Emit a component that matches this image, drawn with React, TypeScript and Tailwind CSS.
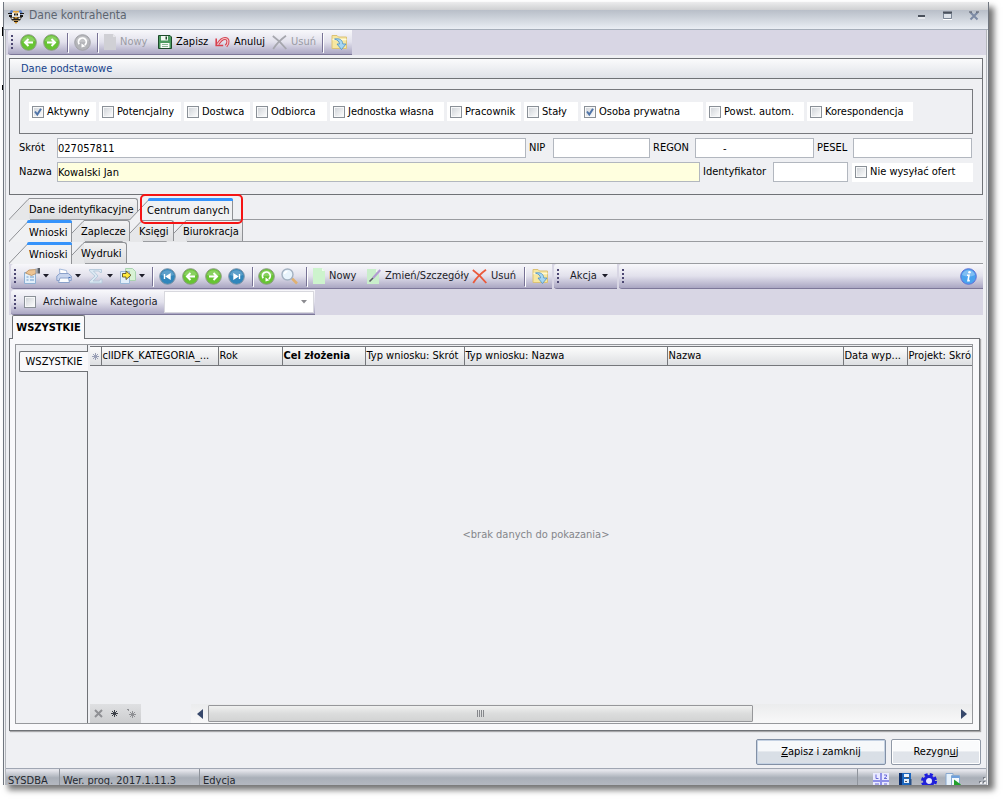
import { useId, useState } from "react";
import type { ReactNode } from "react";

const FLAGS = [
  { label: "Aktywny", width: "w-[67px]", checked: true },
  { label: "Potencjalny", width: "w-[82px]", checked: false },
  { label: "Dostwca", width: "w-[66px]", checked: false },
  { label: "Odbiorca", width: "w-[74px]", checked: false },
  { label: "Jednostka własna", width: "w-[114px]", checked: false },
  { label: "Pracownik", width: "w-[74px]", checked: false },
  { label: "Stały", width: "w-[54px]", checked: false },
  { label: "Osoba prywatna", width: "w-[122px]", checked: true },
  { label: "Powst. autom.", width: "w-[98px]", checked: false },
  { label: "Korespondencja", width: "w-[106px]", checked: false },
];

const COLUMNS = [
  { label: "clIDFK_KATEGORIA_...", width: "w-[117px]" },
  { label: "Rok", width: "w-[64px]" },
  { label: "Cel złożenia", width: "w-[83px]", bold: true },
  { label: "Typ wniosku: Skrót", width: "w-[99px]" },
  { label: "Typ wniosku: Nazwa", width: "w-[203px]" },
  { label: "Nazwa", width: "" },
  { label: "Data wyp...", width: "w-[64px]" },
  { label: "Projekt: Skró", width: "w-[65px]" },
];

interface TabItem {
  label: string;
  width: string;
}

const MAIN_TABS: TabItem[] = [
  { label: "Dane identyfikacyjne", width: "w-[129px]" },
  { label: "Centrum danych", width: "w-[103px]" },
];

const CENTER_TABS: TabItem[] = [
  { label: "Wnioski", width: "w-[63px]" },
  { label: "Zaplecze", width: "w-[66px]" },
  { label: "Księgi", width: "w-[52px]" },
  { label: "Biurokracja", width: "w-[77px]" },
];

const REQUEST_TABS: TabItem[] = [
  { label: "Wnioski", width: "w-[63px]" },
  { label: "Wydruki", width: "w-[63px]" },
];

/* ---------- icons ---------- */

type ArrowKind = "left" | "right" | "first" | "last" | "refresh";

const ARROWS: Record<ArrowKind, ReactNode> = {
  left: <path d="M13 8.5H5M8.5 5L5 8.5L8.5 12" />,
  right: <path d="M4 8.5h8M8.5 5L12 8.5L8.5 12" />,
  first: <path d="M5.5 6v5M11 6.2v4.6L7.5 8.5z" fill="#fff" strokeWidth="1.4" />,
  last: <path d="M11.5 6v5M6 6.2v4.6l3.500-2.300z" fill="#fff" strokeWidth="1.4" />,
  refresh: (
    <>
      <path d="M5.200 10.200A3.900 3.900 0 1 1 10.800 11" strokeWidth="1.800" />
      <path d="M7.500 9.500v4l4-1.200z" fill="#fff" stroke="none" />
    </>
  ),
};

function RoundIcon({ kind, color, edge }: { kind: ArrowKind; color: string; edge: string }) {
  return (
    <svg width="17" height="17" viewBox="0 0 17 17" aria-hidden="true">
      <circle cx="8.5" cy="8.5" r="7.8" fill={color} stroke={edge} />
      <path d="M2 7a6.700 6.200 0 0 1 13 0q-6.500 2.500-13 0z" fill="#fff" opacity="0.22" />
      <g fill="none" stroke="#fff" strokeWidth="2">{ARROWS[kind]}</g>
    </svg>
  );
}

const Green = ({ kind }: { kind: ArrowKind }) => <RoundIcon kind={kind} color="#67c433" edge="#8a9a80" />;
const Blue = ({ kind }: { kind: ArrowKind }) => <RoundIcon kind={kind} color="#3186bb" edge="#7d93a6" />;

function PageIcon({ color, fold }: { color: string; fold: string }) {
  return (
    <svg width="12" height="16" viewBox="0 0 12 16" className="shrink-0" aria-hidden="true">
      <path d="M0 0h9l3 3v13H0z" fill={color} />
      <path d="M9 0v3h3z" fill={fold} />
    </svg>
  );
}

function FloppyIcon() {
  return (
    <svg width="14" height="14" viewBox="0 0 14 14" aria-hidden="true">
      <path d="M.5.5h11.500l1.500 1.500v11.500H.5z" fill="#4c9a5f" stroke="#1d4a2b" />
      <path d="M3 1h7v4.500H3z" fill="#f2f6f2" />
      <path d="M7.500 1.500h1.500v3H7.500z" fill="#1d4a2b" />
      <path d="M2.500 8h9v5h-9z" fill="#f7faf7" />
      <path d="M4 9.500h6M4 11.500h6" stroke="#8bb896" />
    </svg>
  );
}

function UndoIcon() {
  return (
    <svg width="15" height="14" viewBox="0 0 15 14" fill="none" aria-hidden="true">
      <path d="M3 9C5.500 5 7.500 3.500 10 3.500C13.500 3.500 14 8 11 11" stroke="#d24553" strokeWidth="3.200" />
      <path d="M3 9C5.500 5 7.500 3.500 10 3.500C13.500 3.500 14 8 11 11" stroke="#f9c4c8" strokeWidth="1.200" />
      <path d="M1.200 3.500v7h7" stroke="#d9404e" strokeWidth="1.600" />
    </svg>
  );
}

function CrossIcon({ color }: { color: string }) {
  return (
    <svg width="15" height="15" viewBox="0 0 15 15" fill="none" aria-hidden="true">
      <path d="M.8 1Q8 6 14.300 14M14 .8Q6 6.500 1.200 14" stroke={color} strokeWidth="1.800" />
    </svg>
  );
}

function FolderIcon() {
  return (
    <svg width="17" height="16" viewBox="0 0 17 16" aria-hidden="true">
      <path d="M1 1.500h5l1.500 1.500h8v11.500H1z" fill="#f6e7a0" stroke="#dcc275" />
      <path d="M1.500 5.500h14" stroke="#fff9d8" strokeWidth="1.500" />
      <path d="M3.500 5c5-1 8 .8 8.300 5h3.200l-4.500 5.500L6 10h2.500c-.2-2.500-1.700-4-5-5z" fill="#a5d6f3" stroke="#4a8fc4" strokeWidth=".8" />
    </svg>
  );
}

function HandPageIcon() {
  return (
    <svg width="16" height="16" viewBox="0 0 16 16" aria-hidden="true">
      <path d="M.5 4.500h11v11H.5z" fill="#e2effa" stroke="#8fb0d2" />
      <path d="M2.500 9h2M2.500 12h2M6 9h4M6 12h4" stroke="#6f9bcb" />
      <path d="M1.500 5l3.500-3 7-.5v4l-4.500 2L5 6.500z" fill="#edc493" stroke="#b58a5b" strokeWidth=".8" />
      <path d="M11.500.5h2v5h-2z" fill="#a4abb5" />
      <path d="M13.500 0H16v5.500h-2.500z" fill="#5b6068" />
    </svg>
  );
}

function PrinterIcon() {
  return (
    <svg width="16" height="16" viewBox="0 0 16 16" aria-hidden="true">
      <path d="M3.500 1l7 1.500 1 5H4z" fill="#fff" stroke="#a5b9dc" />
      <path d="M.8 8l3-2.500h8.500l3 2.500v4.500H.8z" fill="#c8d5ee" stroke="#8ba1ca" />
      <path d="M4 10h8.500l1 4.500H2.500z" fill="#fbfdff" stroke="#8ba1ca" />
      <path d="M12.500 9.500h2" stroke="#3f6db4" />
    </svg>
  );
}

function SigmaIcon() {
  return (
    <svg width="16" height="16" viewBox="0 0 16 16" aria-hidden="true">
      <path d="M1.500 1.500h12v3h-1.500l-1-1.500H5.500L10 8l-5 5h6.500l1-2H14v4H1.500v-1.500L7 8 1.500 3z" fill="#dbe8f2" stroke="#b3c8da" strokeWidth=".9" />
    </svg>
  );
}

function ExportIcon() {
  return (
    <svg width="16" height="16" viewBox="0 0 16 16" aria-hidden="true">
      <path d="M5.500.5h7l3 3v9h-10z" fill="#d8f2d4" stroke="#a9d2b0" />
      <path d="M.5 3.500h9v12h-9z" fill="#e1eefa" stroke="#9ab8d8" />
      <path d="M2.500 5.500h3.500V3l5 4.200-5 4.300V9H2.500z" fill="#ffe93b" stroke="#5d5426" strokeWidth=".9" />
    </svg>
  );
}

function SearchIcon() {
  return (
    <svg width="17" height="17" viewBox="0 0 17 17" fill="none" aria-hidden="true">
      <path d="M11 10.500l5 5" stroke="#e0b070" strokeWidth="2.500" />
      <circle cx="6.500" cy="6.500" r="5.500" fill="#e8f4fc" stroke="#a3b1c1" strokeWidth="1.400" />
      <path d="M3.500 6a3 3 0 0 1 3-2.500" stroke="#fff" strokeWidth="1.500" />
    </svg>
  );
}

function EditIcon() {
  return (
    <svg width="14" height="16" viewBox="0 0 14 16" className="shrink-0" aria-hidden="true">
      <path d="M0 1h9l3 3v12H0z" fill="#c9eecb" />
      <path d="M9 1v3h3z" fill="#eefaee" />
      <path d="M13.300 2L6 10" stroke="#b29bd2" strokeWidth="2.200" />
      <path d="M6 10L2.500 13.500" stroke="#5c5c66" strokeWidth="1.600" />
    </svg>
  );
}

function InfoIcon() {
  return (
    <svg width="17" height="17" viewBox="0 0 17 17" aria-hidden="true">
      <circle cx="8.5" cy="8.5" r="7.8" fill="#4aa3ee" stroke="#5f6fd6" />
      <path d="M2 7a6.700 6.200 0 0 1 13 0q-6.500 3-13 0z" fill="#fff" opacity=".3" />
      <circle cx="9.500" cy="4.300" r="1.300" fill="#fff" />
      <path d="M7 7.300h2L8 12.600h1.800" fill="none" stroke="#fff" strokeWidth="1.600" />
    </svg>
  );
}

function BeeIcon() {
  return (
    <svg width="16" height="14" viewBox="0 0 16 14" aria-hidden="true">
      <path d="M3 0l4 1.500-2 4-4-2zM13 0L9 1.500l2 4 4-2z" fill="#5a7fc4" />
      <path d="M0 3h4v1H0zM12 3h4v1h-4zM1 5h3v2H1zM12 5h3v2h-3z" fill="#1c1a18" />
      <path d="M5 1h6v4H5z" fill="#e2a33a" />
      <path d="M4 2.500h3.500v4H4zM8.500 2.500H12v4H8.500z" fill="#f7f3ea" />
      <path d="M6 3.500h1.500v2H6zM8.500 3.500H10v2H8.500z" fill="#111" />
      <path d="M2 7h12l-2 3.500H4z" fill="#24211d" />
      <path d="M3.500 7.500h2V9h-2zM10.500 7.500h2V9h-2z" fill="#f0ead9" />
      <path d="M6.500 7h3v1.500h-3zM5 10.500h6L8 14z" fill="#d6962a" />
      <path d="M6 11.500h4" stroke="#201a12" />
    </svg>
  );
}

const Caret = () => (
  <svg width="6" height="4" viewBox="0 0 6 4" aria-hidden="true">
    <path d="M0 0h6L3 3.500z" fill="currentColor" />
  </svg>
);

/* ---------- building blocks ---------- */

function CheckBox({ label, checked = false, className = "" }: { label: string; checked?: boolean; className?: string }) {
  const id = useId();
  const [on, setOn] = useState(checked);
  return (
    <div className={`flex items-center gap-[3px] whitespace-nowrap ${className}`}>
      <span className="relative flex">
        <input
          id={id}
          type="checkbox"
          checked={on}
          onChange={(e) => setOn(e.target.checked)}
          className="h-3 w-3 appearance-none border border-[#8a9097] bg-linear-to-br from-[#cdd1d6] to-white shadow-[inset_0_0_0_1px_#f7f8f9]"
        />
        {on && (
          <svg width="12" height="12" viewBox="0 0 12 12" fill="none" className="pointer-events-none absolute inset-0">
            <path d="M3 5.500l2.300 3L9 2.800" stroke="#4f74a8" strokeWidth="2" />
          </svg>
        )}
      </span>
      <label htmlFor={id}>{label}</label>
    </div>
  );
}

function Field({ label, labelClass, inputClass, value = "" }: { label: string; labelClass: string; inputClass: string; value?: string }) {
  const id = useId();
  return (
    <>
      <label htmlFor={id} className={`shrink-0 ${labelClass}`}>
        {label}
      </label>
      <input id={id} defaultValue={value} className={`h-5 min-w-0 border border-[#b2b7bf] outline-none ${inputClass}`} />
    </>
  );
}

function SlantTab({ tab, index, active, onClick }: { tab: TabItem; index: number; active: boolean; onClick: () => void }) {
  return (
    <button
      type="button"
      role="tab"
      aria-selected={active}
      onClick={onClick}
      style={{ zIndex: active ? 10 : 9 - index }}
      className={`relative pt-[3px] text-left whitespace-nowrap ${tab.width} ${active ? "h-[22px]" : "h-[21px]"} ${
        index > 0 ? "-ml-2 pl-[17px]" : "pl-5"
      }`}
    >
      <svg width="21" height="22" viewBox="0 0 21 22" className="absolute top-0 left-0" aria-hidden="true">
        <path d="M0 22L19 1.500Q20 .5 21 .5V22z" fill={active ? "#f0f1f3" : "#e6e7e9"} />
        <path d="M0 21.500L19 1.500Q20 .5 21 .5" fill="none" stroke="#8f9195" />
      </svg>
      <span
        className={`absolute inset-y-0 right-0 left-5 rounded-tr-[3px] border-r border-[#8f9195] ${
          active ? "bg-[#f0f1f3]" : "border-t bg-linear-to-b from-[#f2f2f3] to-[#dddee0]"
        }`}
      />
      {active && <span className="absolute top-0 right-0 left-[18px] h-[3px] rounded-t-[2px] bg-[#3593fb]" />}
      <span className="relative">{tab.label}</span>
    </button>
  );
}

function TabRow({ tabs, initial, name, className = "", children }: { tabs: TabItem[]; initial: number; name: string; className?: string; children?: ReactNode }) {
  const [current, setCurrent] = useState(initial);
  return (
    <div role="tablist" aria-label={name} className={`relative isolate mx-[3px] flex h-[22px] items-start border-b border-[#9a9ca0] ${className}`}>
      {tabs.map((tab, i) => (
        <SlantTab key={tab.label} tab={tab} index={i} active={i === current} onClick={() => setCurrent(i)} />
      ))}
      {children}
    </div>
  );
}

function Toolbar({ name, className = "", children }: { name: string; className?: string; children?: ReactNode }) {
  return (
    <div
      role="toolbar"
      aria-label={name}
      className={`flex h-[25px] items-center rounded-l-[3px] border-b border-[#7d7899] bg-linear-to-b from-[#f8f8fb] via-[#e2e1ec] to-[#aaa6c2] ${className}`}
    >
      <span className="flex w-[9px] shrink-0 flex-col items-start gap-[2px] pl-[3px]">
        {[0, 1, 2, 3].map((i) => (
          <span key={i} className="h-[2px] w-[2px] bg-[#4d4873]" />
        ))}
      </span>
      {children}
    </div>
  );
}

const Separator = () => (
  <span className="flex w-2 shrink-0 justify-center">
    <span className="h-[19px] w-px bg-[#777295] shadow-[1px_1px_0_#fff]" />
  </span>
);

function IconButton({ title, width, children }: { title: string; width: string; children: ReactNode }) {
  return (
    <button type="button" aria-label={title} className={`flex shrink-0 items-center justify-center ${width}`}>
      {children}
    </button>
  );
}

function MenuButton({ title, children }: { title: string; children: ReactNode }) {
  return (
    <button type="button" aria-label={title} className="flex w-8 shrink-0 items-center gap-[3px] pl-1">
      {children}
      <Caret />
    </button>
  );
}

function TextButton({ label, icon, width, muted = false }: { label: string; icon: ReactNode; width: string; muted?: boolean }) {
  return (
    <button type="button" className={`flex shrink-0 items-center gap-1 pl-[3px] whitespace-nowrap ${width} ${muted ? "text-[#9a9ba3]" : ""}`}>
      {icon}
      {label}
    </button>
  );
}

/* ---------- window sections ---------- */

function TitleBar() {
  return (
    <header className="border-b border-[#a5adb9]">
      <div className="h-2 bg-linear-to-b from-[#ececed] to-[#cfd0d2]" />
      <div className="flex h-[19px] items-start bg-linear-to-b from-[#b8bec8] to-[#eaeef4] pr-[9px] pl-1">
        <BeeIcon />
        <h1 className="-mt-[2px] flex-1 pl-[5px] text-[12px] text-[#5d6570]">Dane kontrahenta</h1>
        <div className="flex items-center gap-4">
          <button type="button" aria-label="Minimalizuj" className="p-px">
            <svg width="8" height="10" viewBox="0 0 8 10">
              <path d="M0 4h7v2H0z" fill="#4a515c" />
              <path d="M0 7h7" stroke="#fff" />
            </svg>
          </button>
          <button type="button" aria-label="Maksymalizuj">
            <svg width="10" height="10" viewBox="0 0 10 10" fill="none">
              <path d="M.5 2.500h8v5h-8z" fill="#dde2e9" stroke="#7a8594" />
              <path d="M0 1.500h9" stroke="#4a515c" strokeWidth="2" />
              <path d="M0 8.500h9" stroke="#fff" />
            </svg>
          </button>
          <button type="button" aria-label="Zamknij">
            <svg width="10" height="10" viewBox="0 0 10 10" fill="none">
              <path d="M1.500 1.500l7 7M8.500 1.500l-7 7" stroke="#7d8ba5" strokeWidth="2" />
              <path d="M0 1h3M7 1h3" stroke="#4a515c" />
            </svg>
          </button>
        </div>
      </div>
    </header>
  );
}

function BasicData() {
  return (
    <section className="mx-[3px] mt-[3px] border border-[#6f7276]">
      <h2 className="flex h-5 items-center border-b border-[#6f7276] bg-linear-to-b from-[#fbfbfc] to-[#dfe2e8] pl-[11px] text-[#15428b]">
        Dane podstawowe
      </h2>
      <div className="px-[9px] pt-[10px] pb-3">
        <div className="flex h-[45px] items-center gap-[3px] border border-[#77797d] pl-[9px]">
          {FLAGS.map((flag) => (
            <CheckBox
              key={flag.label}
              label={flag.label}
              checked={flag.checked}
              className={`h-[19px] shrink-0 bg-white pl-[3px] ${flag.width}`}
            />
          ))}
        </div>
        <div className="mt-1 flex items-center pr-px">
          <Field label="Skrót" labelClass="w-[38px]" inputClass="flex-1 bg-white" value="027057811" />
          <Field label="NIP" labelClass="w-[27px] pl-[3px]" inputClass="w-[97px] bg-white" />
          <Field label="REGON" labelClass="w-[45px] pl-[3px]" inputClass="w-[119px] bg-white pl-[27px]" value="-" />
          <Field label="PESEL" labelClass="w-[39px] pl-[3px]" inputClass="w-[119px] bg-white" />
        </div>
        <div className="mt-1 flex items-center">
          <Field label="Nazwa" labelClass="w-[38px]" inputClass="flex-1 bg-[#ffffdf]" value="Kowalski Jan" />
          <Field label="Identyfikator" labelClass="w-[73px] pl-[3px]" inputClass="w-[75px] bg-white" />
          <CheckBox label="Nie wysyłać ofert" className="ml-1 h-[19px] w-[121px] shrink-0 bg-white pl-[3px]" />
        </div>
      </div>
    </section>
  );
}

function RequestToolbars() {
  return (
    <div className="mx-[3px] bg-[#d8d6e4] pl-[2px] text-[#1c1c28]">
      <div className="flex h-[26px] gap-[2px]">
        <Toolbar name="Wnioski">
          <MenuButton title="Widok"><HandPageIcon /></MenuButton>
          <MenuButton title="Drukuj"><PrinterIcon /></MenuButton>
          <MenuButton title="Sumy"><SigmaIcon /></MenuButton>
          <MenuButton title="Eksport"><ExportIcon /></MenuButton>
          <Separator />
          <IconButton title="Pierwszy" width="w-[23px]"><Blue kind="first" /></IconButton>
          <IconButton title="Poprzedni" width="w-[23px]"><Green kind="left" /></IconButton>
          <IconButton title="Następny" width="w-[23px]"><Green kind="right" /></IconButton>
          <IconButton title="Ostatni" width="w-[23px]"><Blue kind="last" /></IconButton>
          <Separator />
          <IconButton title="Odśwież" width="w-5"><Green kind="refresh" /></IconButton>
          <IconButton title="Szukaj" width="w-[26px]"><SearchIcon /></IconButton>
          <Separator />
          <TextButton label="Nowy" width="w-[54px]" icon={<PageIcon color="#cdf3cd" fold="#f0fbf0" />} />
          <TextButton label="Zmień/Szczegóły" width="w-[105px]" icon={<EditIcon />} />
          <TextButton label="Usuń" width="w-[51px]" icon={<CrossIcon color="#ea5a3c" />} />
          <Separator />
          <IconButton title="Załączniki" width="w-6"><FolderIcon /></IconButton>
        </Toolbar>
        <Toolbar name="Akcja">
          <button type="button" className="flex w-[54px] items-center gap-[5px] pl-[7px]">
            Akcja
            <Caret />
          </button>
        </Toolbar>
        <Toolbar name="Informacje" className="min-w-0 flex-1">
          <button type="button" aria-label="Informacja" className="mr-[6px] ml-auto">
            <InfoIcon />
          </button>
        </Toolbar>
      </div>
      <div className="flex">
        <Toolbar name="Filtr" className="w-[304px]">
          <CheckBox label="Archiwalne" className="w-[90px] gap-[7px] pl-1 text-[#1c1c28]" />
          <label htmlFor="kategoria" className="w-[54px]">
            Kategoria
          </label>
          <div className="relative flex flex-1 items-center pr-px">
            <select id="kategoria" className="h-[22px] w-full appearance-none border border-[#d8d8de] bg-white outline-none">
              <option></option>
            </select>
            <span className="pointer-events-none absolute right-2 text-[#8b8b90]">
              <Caret />
            </span>
          </div>
        </Toolbar>
      </div>
    </div>
  );
}

function ScrollBar() {
  return (
    <div className="flex flex-1 items-center bg-linear-to-b from-[#ebeced] to-[#f8f8f9]">
      <button type="button" aria-label="W lewo" className="flex w-[17px] justify-center">
        <svg width="6" height="10" viewBox="0 0 6 10">
          <path d="M6 0v10L0 5z" fill="#37486b" />
        </svg>
      </button>
      <div className="flex flex-1">
        <div className="flex h-[17px] w-[73%] items-center justify-center gap-px rounded-[1px] border border-[#96979a] bg-linear-to-b from-[#f0f1f0] via-[#dcdddd] to-[#d2d3d3]">
          {[0, 1, 2, 3].map((i) => (
            <span key={i} className="h-[7px] w-px bg-[#85878b]" />
          ))}
        </div>
      </div>
      <button type="button" aria-label="W prawo" className="flex w-[17px] justify-center">
        <svg width="6" height="10" viewBox="0 0 6 10">
          <path d="M0 0v10l6-5z" fill="#37486b" />
        </svg>
      </button>
    </div>
  );
}

function Star({ color }: { color: string }) {
  return (
    <svg width="9" height="9" viewBox="0 0 9 9" aria-hidden="true">
      <path d="M4.500 1v7M1 4.500h7M2 2l5 5M7 2l-5 5" stroke={color} />
      <path d="M3.500 3.500h2v2h-2z" fill={color} />
    </svg>
  );
}

function DataGrid() {
  return (
    <div className="flex min-w-0 flex-1 flex-col pt-px pl-[2px]">
      <table className="w-full table-fixed border-collapse">
        <thead>
          <tr className="h-[19px] bg-linear-to-b from-[#fcfcfc] to-[#dcdee1]">
            <th className="w-[11px] border border-[#75777b] border-l-0 p-0" aria-label="Znacznik">
              <span className="flex justify-center"><Star color="#9aa0b6" /></span>
            </th>
            {COLUMNS.map((col) => (
              <th
                key={col.label}
                className={`border border-[#75777b] p-0 pl-px text-left whitespace-nowrap last:border-r-0 ${col.width} ${
                  col.bold ? "font-bold" : "font-normal"
                }`}
              >
                {col.label}
              </th>
            ))}
          </tr>
        </thead>
      </table>
      <p className="flex flex-1 items-center justify-center pl-[10px] text-[#84868a]">&lt;brak danych do pokazania&gt;</p>
      <div className="flex h-[19px]">
        <div className="mr-[50px] flex w-[51px] items-center justify-around bg-linear-to-b from-[#dfe0e2] to-[#cccdcf]">
          <button type="button" aria-label="Wyczyść filtr">
            <svg width="9" height="9" viewBox="0 0 9 9">
              <path d="M1 1l7 7M8 1L1 8" stroke="#8f9094" strokeWidth="2" />
            </svg>
          </button>
          <button type="button" aria-label="Dodaj"><Star color="#3d4148" /></button>
          <button type="button" aria-label="Dodaj kopię">
            <svg width="11" height="11" viewBox="0 0 11 11">
              <path d="M6.500 3v7M3 6.500h7M4 4l5 5M9 4L4 9M1 1.500h2M2.500 1v2" stroke="#8f9094" fill="none" />
            </svg>
          </button>
        </div>
        <ScrollBar />
      </div>
    </div>
  );
}

function StatusBar() {
  return (
    <footer className="flex h-[17px] overflow-hidden border-t border-[#a0a6b2] bg-linear-to-b from-[#e3e4ea] from-10% via-[#a9afb8] via-55% to-[#b4b8c0] text-[#24282f]">
      <span className="w-[54px] shrink-0 border-r border-[#8f949c] pt-[5px] pl-[2px]">SYSDBA</span>
      <span className="w-[140px] shrink-0 border-r border-[#8f949c] pt-[5px] pl-[3px]">Wer. prog. 2017.1.11.3</span>
      <span className="flex-1 pt-[5px] pl-[3px]">Edycja</span>
      <span className="flex w-[129px] shrink-0 items-start gap-2 border-l border-[#8f949c] pt-1 pl-[15px]">
        <svg width="16" height="16" viewBox="0 0 16 16">
          <path d="M0 0h16v16H0z" fill="#8f90e8" />
          <path d="M0 0h7v7H0zM9 0h7v7H9zM0 9h7v7H0zM9 9h7v7H9z" fill="#e9e9ff" />
          <path d="M3 1.500V5.500H5.500M11 2h2.500v1.500L11 5.500h3M2 11h4M11 11h3" fill="none" stroke="#6a6bd8" />
        </svg>
        <svg width="16" height="16" viewBox="0 0 16 16">
          <path d="M2 0h12v16H2z" fill="#1c66bd" />
          <path d="M2 0h3v16H2z" fill="#0c2f6e" />
          <path d="M7 1h5v3H7zM7 6h5v4H7z" fill="#e8f1fc" />
          <path d="M9 4.500h3M8 8.500h2" stroke="#555" />
          <path d="M12.500 6h2v10h-2z" fill="#274f87" />
        </svg>
        <svg width="16" height="16" viewBox="0 0 16 16">
          <circle cx="8" cy="8" r="6.500" fill="none" stroke="#1c1ce0" strokeWidth="3" strokeDasharray="3 2.100" />
          <circle cx="8" cy="8" r="4.500" fill="#e6e6ff" stroke="#2222d8" strokeWidth="3" />
        </svg>
        <svg width="17" height="16" viewBox="0 0 17 16">
          <path d="M1 .5h7v12H1z" fill="#e6f1fb" stroke="#88a9d0" />
          <path d="M6.500 2.500h8v12h-8z" fill="#f6fafe" stroke="#88a9d0" />
          <path d="M6.500 4h8" stroke="#6fa0dc" strokeWidth="2" />
          <path d="M9 6.500l7 5-7 5z" fill="#22a02a" />
        </svg>
        <svg width="8" height="12" viewBox="0 0 8 12" className="ml-2">
          <path d="M5 4h2v2H5zM1 8h2v2H1zM5 8h2v2H5z" fill="#777c85" />
          <path d="M6 5h2v2H6zM2 9h2v2H2zM6 9h2v2H6z" fill="#fff" opacity=".8" />
        </svg>
      </span>
    </footer>
  );
}

export default function App() {
  return (
    <div className="relative flex min-h-screen bg-white pt-[2px] pr-[14px] pb-[14px] pl-[3px] font-['DejaVu_Sans_Condensed','DejaVu_Sans',sans-serif] text-[11px] leading-[14px] text-black">
      {/* slivers of the window underneath */}
      <span className="absolute top-[27px] left-[2px] h-[9px] w-px bg-black" />
      <span className="absolute top-[85px] left-[2px] h-[5px] w-px bg-black" />
      <div className="flex min-w-0 flex-1 flex-col border-x border-[#70767f] bg-[#eff0f3] shadow-[5px_5px_6px_rgba(0,0,0,0.55)]">
        <TitleBar />
        <main className="mx-px flex flex-1 flex-col border-x border-[#b4b7bc]">
          <div className="flex h-[25px] bg-[#d8d6e4] pl-[2px]">
            <Toolbar name="Kontrahent">
              <IconButton title="Wstecz" width="w-[23px]"><Green kind="left" /></IconButton>
              <IconButton title="Dalej" width="w-[23px]"><Green kind="right" /></IconButton>
              <Separator />
              <IconButton title="Odśwież" width="w-[22px]"><RoundIcon kind="refresh" color="#b3b4b8" edge="#a2a3a8" /></IconButton>
              <Separator />
              <TextButton label="Nowy" width="w-[54px]" muted icon={<PageIcon color="#d0d0d5" fold="#e6e6ea" />} />
              <TextButton label="Zapisz" width="w-[57px]" icon={<FloppyIcon />} />
              <TextButton label="Anuluj" width="w-[57px]" icon={<UndoIcon />} />
              <TextButton label="Usuń" width="w-[49px]" muted icon={<CrossIcon color="#a6a7ae" />} />
              <Separator />
              <IconButton title="Załączniki" width="w-[26px]"><FolderIcon /></IconButton>
            </Toolbar>
          </div>

          <BasicData />

          <div className="mt-[3px]">
            <TabRow tabs={MAIN_TABS} initial={1} name="Kontrahent" className="z-10">
              <span className="pointer-events-none absolute -top-1 left-[131px] z-20 h-[30px] w-[103px] rounded-[5px] border-2 border-[#f51414]" />
            </TabRow>
            <TabRow tabs={CENTER_TABS} initial={0} name="Centrum danych" />
            <TabRow tabs={REQUEST_TABS} initial={0} name="Wnioski" />
          </div>

          <RequestToolbars />

          <div className="mr-[6px] ml-[3px] flex flex-1 flex-col">
            <div role="tablist" aria-label="Kategorie" className="flex pl-[3px]">
              <button
                type="button"
                role="tab"
                aria-selected="true"
                className="relative -mb-px h-6 w-[73px] rounded-t-[2px] border border-b-0 border-[#6f7276] bg-[#fafafb] text-center font-bold whitespace-nowrap"
              >
                WSZYSTKIE
              </button>
            </div>
            <div className="flex flex-1 border border-[#6f7276] bg-[#f9f9fb] pt-[5px] pr-[6px] pb-[6px] pl-[5px] shadow-[1px_1px_1px_rgba(0,0,0,0.3)]">
              <div className="flex min-w-0 flex-1 border border-[#96989c] bg-[#eff0f3]">
                <div role="tablist" aria-label="Widoki" className="flex w-[72px] shrink-0 flex-col border-r border-[#6f7276] pt-[6px] pl-[3px]">
                  <button
                    type="button"
                    role="tab"
                    aria-selected="true"
                    className="-mr-px h-[21px] rounded-l-[2px] border border-r-0 border-[#6f7276] bg-[#f9f9fb] text-center"
                  >
                    WSZYSTKIE
                  </button>
                </div>
                <DataGrid />
              </div>
            </div>
          </div>

          <div className="mt-2 mr-[5px] mb-[3px] flex justify-end gap-[5px]">
            <button
              type="button"
              className="h-[26px] w-[130px] rounded-[2px] border border-[#8290a5] bg-linear-to-b from-[#f6f8fa] from-45% to-[#d9dfe6] to-50% shadow-[inset_0_0_0_1px_#c5d2e3]"
            >
              <u>Z</u>apisz i zamknij
            </button>
            <button
              type="button"
              className="h-[26px] w-[90px] rounded-[2px] border border-[#8f98a6] bg-linear-to-b from-[#fafbfc] from-45% to-[#e0e4ea] to-50% shadow-[inset_0_0_0_1px_#fff]"
            >
              Rezygn<u>u</u>j
            </button>
          </div>

          <StatusBar />
        </main>
      </div>
    </div>
  );
}
